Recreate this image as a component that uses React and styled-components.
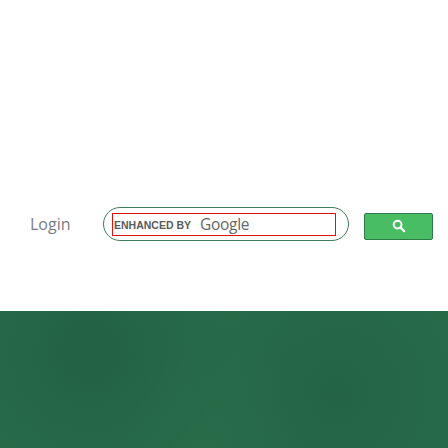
import React from 'react';
import styled, { createGlobalStyle } from 'styled-components';

const GlobalStyle = createGlobalStyle`
  html, body { margin: 0; padding: 0; background: #fff; }
  body { font-family: "Open Sans", "Liberation Sans", sans-serif; }
`;

// --- ICONS ---
const SearchIcon = () => (
  <svg width="14" height="14" viewBox="0 0 14 14" fill="none">
    <circle cx="5.6" cy="5.6" r="3.9" stroke="#fff" strokeWidth="2" />
    <path d="M8.4 8.4L12.2 12.2" stroke="#fff" strokeWidth="2.2" strokeLinecap="round" />
  </svg>
);

const Page = styled.div`
  width: 448px;
  height: 448px;
  display: flex;
  flex-direction: column;
  overflow: hidden;
`;

const TopArea = styled.div`
  height: 311px;
  padding-top: 207px;
  box-sizing: border-box;
`;

const Toolbar = styled.div`
  display: flex;
  align-items: center;
  height: 34px;
  padding-left: 30px;
`;

const LoginLink = styled.a`
  font-family: "Open Sans", sans-serif;
  font-size: 16px;
  color: #7b7b84;
  text-decoration: none;
  width: 73px;
  margin-top: 0;
`;

const SearchPill = styled.div`
  width: 246px;
  height: 34px;
  box-sizing: border-box;
  border: 1px solid #3f7d5c;
  border-radius: 17px;
  display: flex;
  align-items: center;
  padding-left: 8px;
`;

const SearchField = styled.div`
  width: 224px;
  height: 23px;
  box-sizing: border-box;
  border: 1px solid #e01010;
  display: flex;
  align-items: center;
  padding-left: 1px;
  gap: 9px;
`;

const Enhanced = styled.span`
  font-family: "Liberation Sans", Arial, sans-serif;
  font-size: 10.5px;
  font-weight: 700;
  color: #5a5a5a;
  letter-spacing: 0;
  margin-top: 2px;
`;

const GoogleWord = styled.span`
  font-family: "Open Sans", sans-serif;
  font-size: 15.5px;
  color: #666;
  letter-spacing: -0.3px;
`;

const SearchButton = styled.button`
  width: 69px;
  height: 27px;
  margin-left: 15px;
  margin-top: 5px;
  box-sizing: border-box;
  border: 1px solid #2f7a4c;
  border-radius: 2px;
  background: #49bd63;
  display: flex;
  align-items: center;
  justify-content: center;
  padding: 0 0 2px 0;
  cursor: pointer;
`;

const GreenBand = styled.div`
  flex: 1;
  background-color: #276b49;
  background-image:
    radial-gradient(circle at 20% 30%, rgba(20, 70, 45, 0.25), transparent 40%),
    radial-gradient(circle at 75% 60%, rgba(20, 70, 45, 0.2), transparent 45%),
    radial-gradient(circle at 50% 90%, rgba(50, 120, 85, 0.15), transparent 40%);
`;

const App = () => (
  <Page>
    <GlobalStyle />
    <TopArea>
      <Toolbar>
        <LoginLink href="#">Login</LoginLink>
        <SearchPill>
          <SearchField>
            <Enhanced>ENHANCED BY</Enhanced>
            <GoogleWord>Google</GoogleWord>
          </SearchField>
        </SearchPill>
        <SearchButton aria-label="Search">
          <SearchIcon />
        </SearchButton>
      </Toolbar>
    </TopArea>
    <GreenBand />
  </Page>
);

export default App;
